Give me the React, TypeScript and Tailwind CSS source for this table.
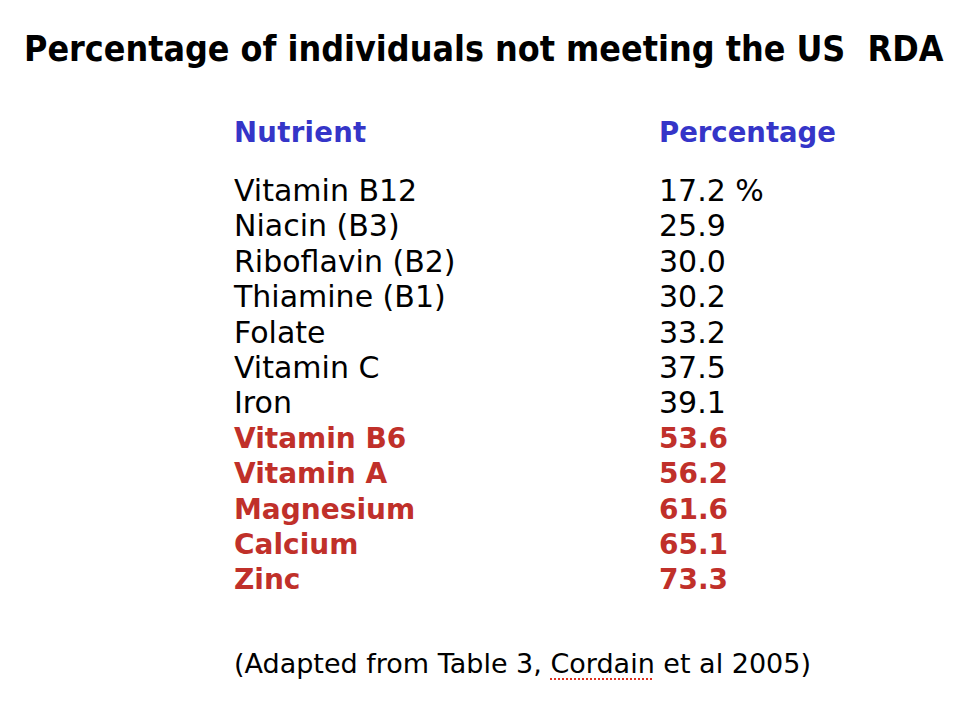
const rows: [string, string, boolean][] = [
  ["Vitamin B12", "17.2 %", false],
  ["Niacin (B3)", "25.9", false],
  ["Riboflavin (B2)", "30.0", false],
  ["Thiamine (B1)", "30.2", false],
  ["Folate", "33.2", false],
  ["Vitamin C", "37.5", false],
  ["Iron", "39.1", false],
  ["Vitamin B6", "53.6", true],
  ["Vitamin A", "56.2", true],
  ["Magnesium", "61.6", true],
  ["Calcium", "65.1", true],
  ["Zinc", "73.3", true],
];

export default function App() {
  return (
    <div
      className="w-[978px] h-[714px] bg-white text-black flex flex-col"
      style={{ fontFamily: '"DejaVu Sans", Verdana, sans-serif' }}
    >
      {/* Titre */}
      <h1
        className="pt-[27px] pl-[24px] text-[35.5px] leading-[44px] font-bold whitespace-pre"
        style={{ fontFamily: '"DejaVu Sans Condensed", "DejaVu Sans", sans-serif' }}
      >
        Percentage of individuals not meeting the US  RDA
      </h1>

      <div className="pl-[234px] pt-[43px]">
        <div className="grid grid-cols-[425px_auto] text-[27.5px] leading-[36px] font-bold text-[#3535c8]">
          <div className="tracking-[0.3px]">Nutrient</div>
          <div>Percentage</div>
        </div>

        <div className="mt-[23px] grid grid-cols-[425px_auto] text-[30px] leading-[35.4px]">
          {rows.map(([name, pct, hi]) => (
            <div key={name} className="contents">
              <div className={hi ? "font-bold text-[28px] text-[#c0302a]" : ""}>{name}</div>
              <div className={hi ? "font-bold text-[28px] text-[#c0302a]" : ""}>{pct}</div>
            </div>
          ))}
        </div>

        <p className="mt-[50px] text-[27px] leading-[32px]">
          (Adapted from Table 3,{" "}
          <span className="underline decoration-dotted decoration-[#e0301e] decoration-2 underline-offset-[6px]">
            Cordain
          </span>{" "}
          et al 2005)
        </p>
      </div>
    </div>
  );
}
